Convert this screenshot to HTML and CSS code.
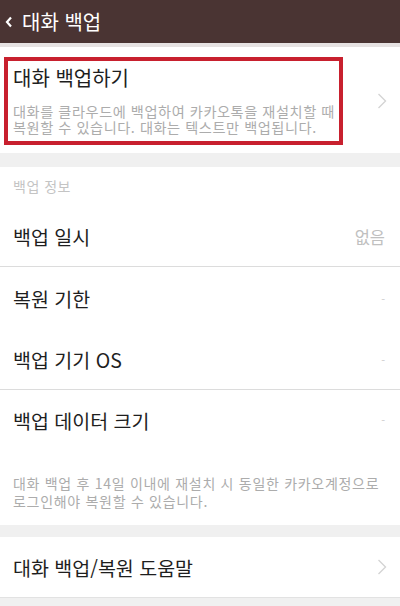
FILE: index.html
```html
<!DOCTYPE html>
<html lang="ko">
<head>
    <meta charset="UTF-8">
    <meta name="viewport" content="width=device-width, initial-scale=1.0">
    <title>대화 백업</title>
    <link rel="stylesheet" href="styles.css">
</head>
<body>
    <header class="app-bar">
        <svg class="back-icon" width="8" height="12" viewBox="0 0 8 12">
            <path d="M6 1.5 L2 6 L6 10.5" fill="none" stroke="#fff" stroke-width="2.2"/>
        </svg>
        <h1>대화 백업</h1>
    </header>

    <section class="panel backup-panel">
        <div class="backup-action">
            <div class="highlight">
                <div class="action-title">대화 백업하기</div>
                <p class="action-desc">대화를 클라우드에 백업하여 카카오톡을 재설치할 때 복원할 수 있습니다. 대화는 텍스트만 백업됩니다.</p>
            </div>
            <svg class="chevron" width="10" height="16" viewBox="0 0 10 16">
                <path d="M1.5 1 L8.5 8 L1.5 15" fill="none" stroke="#d4d4d4" stroke-width="1.4"/>
            </svg>
        </div>
    </section>

    <section class="panel info-panel">
        <div class="section-label">백업 정보</div>
        <div class="info-row divided">
            <span>백업 일시</span>
            <span class="info-value">없음</span>
        </div>
        <div class="info-row tall">
            <span>복원 기한</span>
            <span class="info-value dash">-</span>
        </div>
        <div class="info-row divided">
            <span>백업 기기 OS</span>
            <span class="info-value dash">-</span>
        </div>
        <div class="info-row">
            <span>백업 데이터 크기</span>
            <span class="info-value dash">-</span>
        </div>
        <p class="footnote">대화 백업 후 14일 이내에 재설치 시 동일한 카카오계정으로 로그인해야 복원할 수 있습니다.</p>
    </section>

    <section class="panel help-panel">
        <div class="info-row">
            <span>대화 백업/복원 도움말</span>
            <svg class="chevron" width="10" height="16" viewBox="0 0 10 16">
                <path d="M1.5 1 L8.5 8 L1.5 15" fill="none" stroke="#d4d4d4" stroke-width="1.4"/>
            </svg>
        </div>
    </section>
</body>
</html>
```

FILE: styles.css
```css
body {
    font-family: "Noto Sans CJK KR", "Noto Sans", sans-serif;
    margin: 0;
    padding: 0;
    background: #f0f0f0;
    color: #1e1e1e;
    word-break: keep-all;
}
.app-bar {
    height: 43px;
    background: #4a3433;
    display: flex;
    align-items: center;
    padding-left: 5px;
    border-bottom: 4px solid #e6e2e2;
}
.back-icon {
    margin-right: 9px;
}
.app-bar h1 {
    margin: 0;
    font-size: 20px;
    font-weight: normal;
    color: #fff;
}
.panel {
    background: #fff;
}
.backup-panel {
    padding: 10px 0 8px 4px;
    margin-bottom: 14px;
}
.backup-action {
    display: flex;
    align-items: center;
}
.highlight {
    box-sizing: border-box;
    width: 339px;
    border: 4px solid #c8202e;
    padding: 2px 2px 6px 5px;
}
.action-title {
    font-size: 20px;
    line-height: 30px;
}
.action-desc {
    margin: 11px 0 0;
    font-size: 14.2px;
    letter-spacing: 0.55px;
    line-height: 15.5px;
    color: #acacac;
}
.backup-action .chevron {
    margin-left: 34px;
}
.info-panel {
    margin-bottom: 12px;
}
.section-label {
    height: 40px;
    line-height: 38px;
    padding-left: 13px;
    font-size: 14px;
    letter-spacing: 0.5px;
    color: #c4c4c4;
}
.info-row {
    height: 60px;
    display: flex;
    align-items: center;
    justify-content: space-between;
    padding: 0 13px;
    font-size: 19.5px;
}
.info-row.divided {
    border-bottom: 1px solid #dcdcdc;
    height: 59px;
}
.info-row.tall {
    height: 63px;
}
.info-value {
    color: #c0c0c0;
    font-size: 16.5px;
    margin-right: 2px;
}
.info-value.dash {
    font-size: 11px;
    color: #ccc;
}
.footnote {
    margin: 0;
    padding: 24px 10px 15px 13px;
    font-size: 14px;
    letter-spacing: 0.7px;
    line-height: 18px;
    color: #acacac;
}
.help-panel {
    border-bottom: 1px solid #e2e2e2;
}
```
